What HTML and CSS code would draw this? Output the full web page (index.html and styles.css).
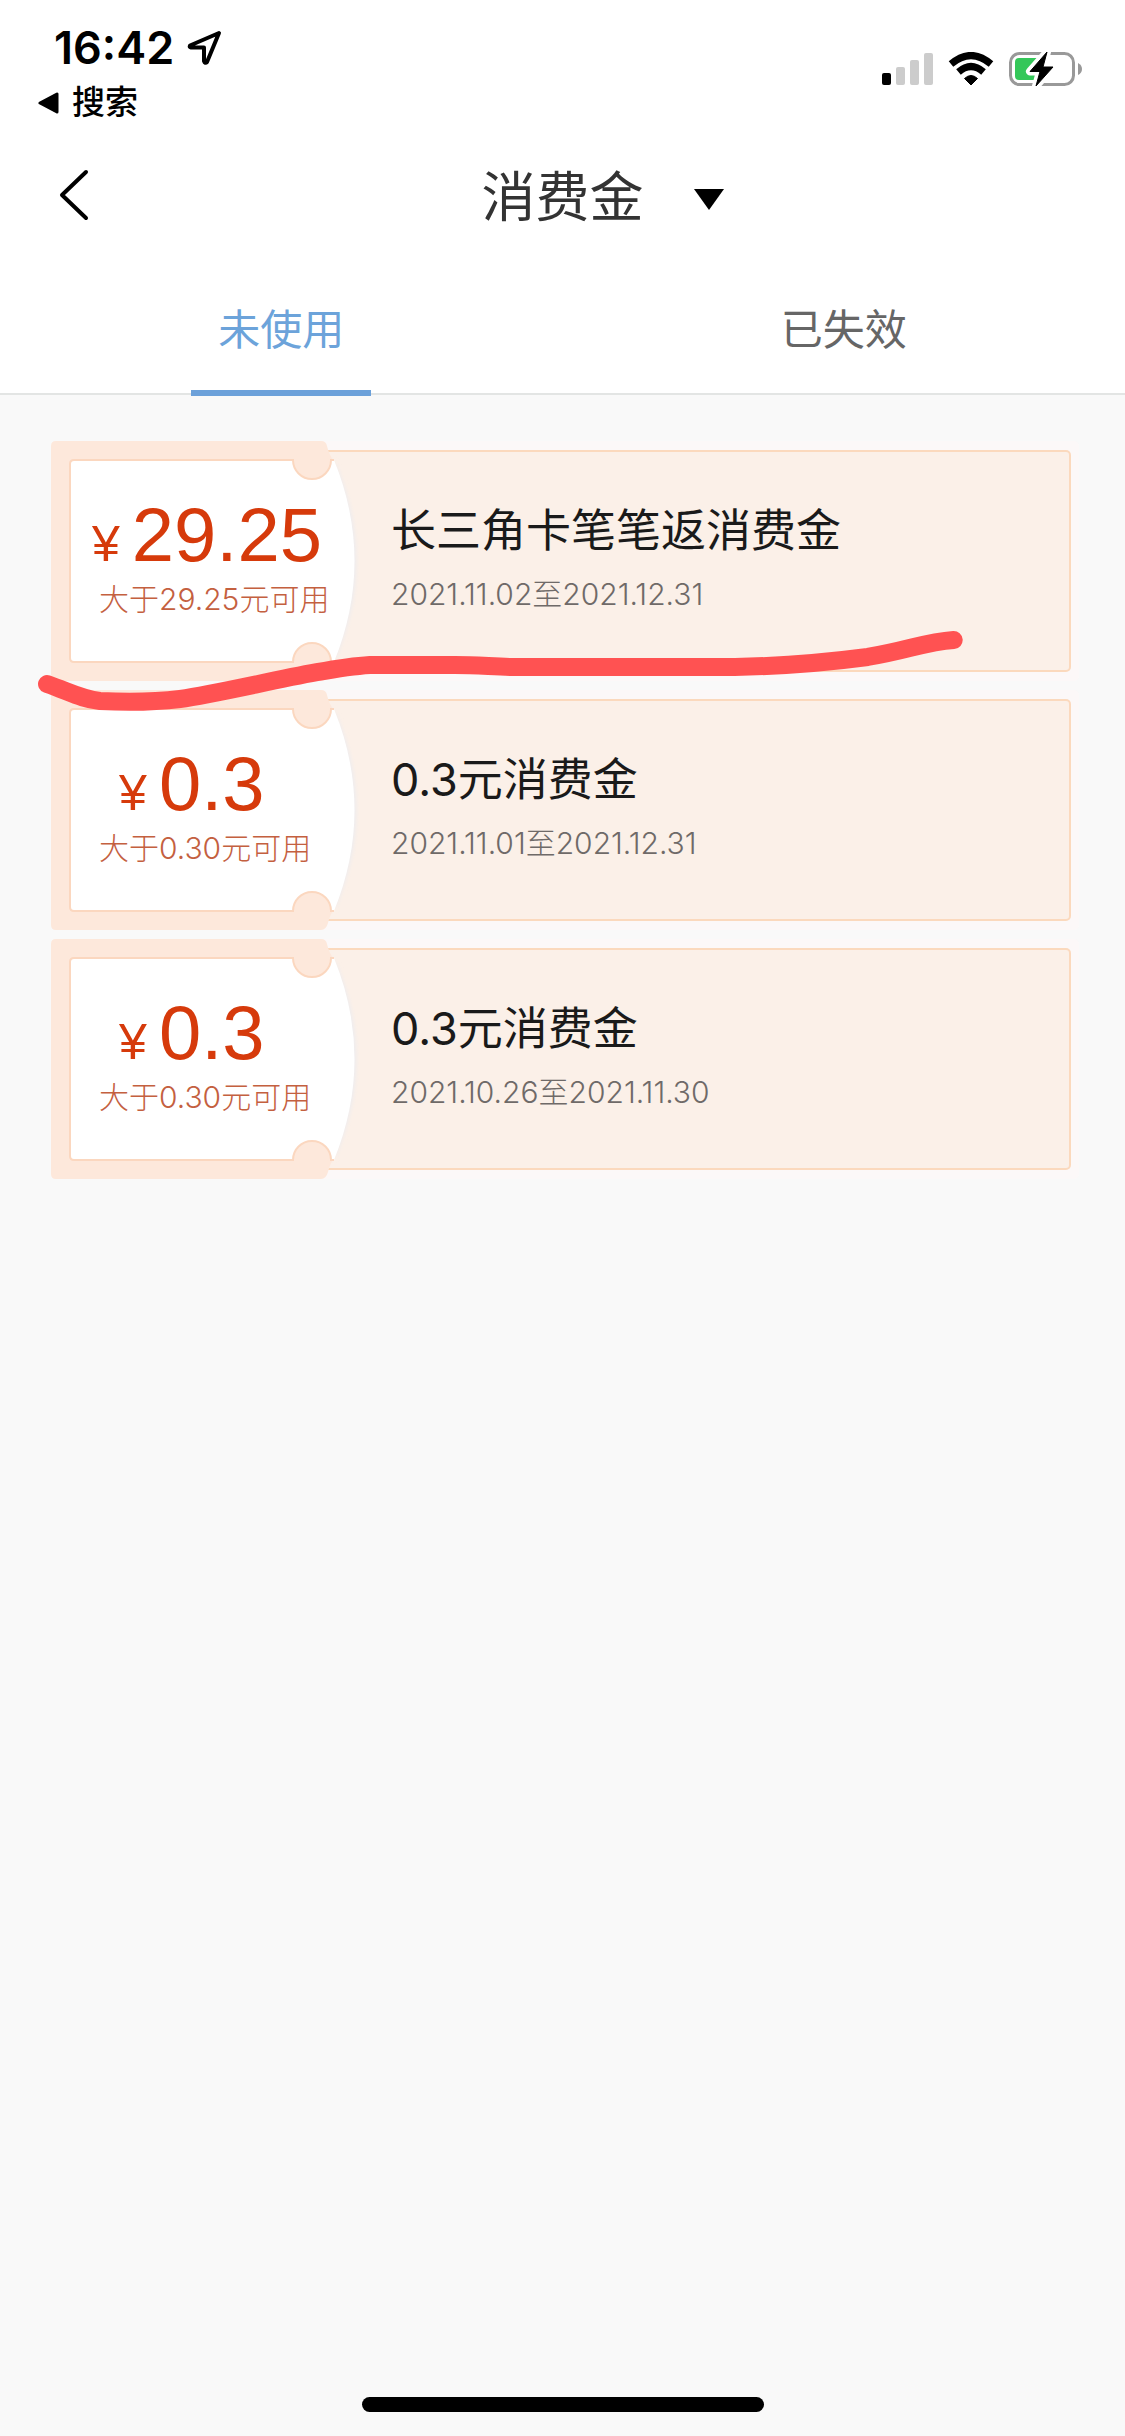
FILE: index.html
```html
<!DOCTYPE html>
<html lang="zh-CN">
<head>
  <meta charset="UTF-8">
  <meta name="viewport" content="width=device-width, initial-scale=1.0">
  <title>消费金</title>
  <link rel="stylesheet" href="styles.css">
</head>
<body>
  <!-- 票券左侧底图 -->
  <svg class="defs" width="0" height="0" aria-hidden="true">
    <defs>
      <filter id="blur"><feGaussianBlur stdDeviation="2"/></filter>
      <symbol id="ticket" viewBox="0 0 312 240">
        <path d="M283 20Q327 120 283 220Z" fill="#ececf0" filter="url(#blur)"/>
        <path d="M5 0H270Q275 0 276 5Q278 14 283 20V220Q279 224 277 233Q275 240 270 240H5Q0 240 0 235V5Q0 0 5 0Z" fill="#fde8db"/>
        <path d="M283 19Q324 120 283 221H23Q19 221 19 217V23Q19 19 23 19Z" fill="#fff"/>
        <path d="M283 19H23Q19 19 19 23V217Q19 221 23 221H283" fill="none" stroke="#fbd7bf" stroke-width="2"/>
        <path d="M242 19A19 19 0 0 0 280 19M242 221A19 19 0 0 1 280 221" fill="#fde8db" stroke="#fbd7bf" stroke-width="2"/>
        <path d="M243 16H279V20H243ZM243 220H279V224H243Z" fill="#fde8db"/>
      </symbol>
    </defs>
  </svg>

  <header class="top">
    <div class="status">
      <div class="status-left">
        <div class="clock">
          <span>16:42</span>
          <svg width="36" height="36" viewBox="0 0 36 36" aria-hidden="true">
            <path d="M32 3L3 15.500Q2 17 4 17.500H17V31Q18 34 20 32Z" fill="none" stroke="#000" stroke-width="4" stroke-linejoin="round"/>
          </svg>
        </div>
        <a class="return" href="#">
          <svg width="22" height="22" viewBox="0 0 22 22" aria-hidden="true">
            <path d="M2 11L19 2V20Z" stroke="#000" stroke-width="3" stroke-linejoin="round"/>
          </svg>
          搜索
        </a>
      </div>
      <div class="status-right">
        <svg width="51" height="34" viewBox="0 0 51 34" aria-hidden="true">
          <rect x="0" y="21" width="9" height="12" rx="2"/>
          <g fill="#ccc">
            <rect x="14" y="15" width="9" height="18" rx="2"/>
            <rect x="28" y="8" width="9" height="25" rx="2"/>
            <rect x="42" y="1" width="9" height="32" rx="2"/>
          </g>
        </svg>
        <svg width="46" height="34" viewBox="0 0 46 34" aria-hidden="true">
          <path d="M23 33L16.500 26.500Q23 20.500 29.500 26.500Z" stroke="#000" stroke-linejoin="round"/>
          <path d="M10.500 20Q23 9 35.500 20" fill="none" stroke="#000" stroke-width="7"/>
          <path d="M3 12Q23 -5 43 12" fill="none" stroke="#000" stroke-width="7"/>
        </svg>
        <svg width="74" height="38" viewBox="0 0 74 38" aria-hidden="true">
          <rect x="1.500" y="3.500" width="63" height="31" rx="9" fill="none" stroke="#999" stroke-width="3"/>
          <path d="M69 13Q73 15 73 19Q73 23 69 25Z" fill="#999"/>
          <rect x="6" y="8" width="30" height="22" rx="4" fill="#34c759"/>
          <path d="M38 2L21 21.500H31L27 36L44 17H34Z" fill="#fff" stroke="#fff" stroke-width="8" stroke-linejoin="round"/>
          <path d="M38 2L21 21.500H31L27 36L44 17H34Z" stroke="#000" stroke-linejoin="round"/>
        </svg>
      </div>
    </div>

    <div class="nav">
      <button class="back" type="button" aria-label="返回">
        <svg width="30" height="52" viewBox="0 0 30 52" aria-hidden="true">
          <path d="M27 3L3 26L27 49" fill="none" stroke="#000" stroke-width="4" stroke-linecap="round" stroke-linejoin="round"/>
        </svg>
      </button>
      <select class="type" aria-label="类型">
        <option>消费金</option>
      </select>
      <svg class="caret" width="30" height="21" viewBox="0 0 30 21" aria-hidden="true">
        <path d="M0 0H30L15 21Z"/>
      </svg>
    </div>

    <div class="tabs" role="tablist">
      <button class="tab active" type="button" role="tab" aria-selected="true">未使用</button>
      <button class="tab" type="button" role="tab" aria-selected="false">已失效</button>
    </div>
  </header>

  <main class="list">
    <article class="coupon">
      <svg class="ticket" aria-hidden="true"><use href="#ticket"/></svg>
      <div class="value">
        <p class="amount"><span class="yen">¥</span><span class="num">29.25</span></p>
        <p class="limit">大于29.25元可用</p>
      </div>
      <div class="info">
        <h2>长三角卡笔笔返消费金</h2>
        <p class="date">2021.11.02至2021.12.31</p>
      </div>
    </article>
    <article class="coupon">
      <svg class="ticket" aria-hidden="true"><use href="#ticket"/></svg>
      <div class="value">
        <p class="amount"><span class="yen">¥</span><span class="num">0.3</span></p>
        <p class="limit">大于0.30元可用</p>
      </div>
      <div class="info">
        <h2>0.3元消费金</h2>
        <p class="date">2021.11.01至2021.12.31</p>
      </div>
    </article>
    <article class="coupon">
      <svg class="ticket" aria-hidden="true"><use href="#ticket"/></svg>
      <div class="value">
        <p class="amount"><span class="yen">¥</span><span class="num">0.3</span></p>
        <p class="limit">大于0.30元可用</p>
      </div>
      <div class="info">
        <h2>0.3元消费金</h2>
        <p class="date">2021.10.26至2021.11.30</p>
      </div>
    </article>

    <!-- 红色手绘线 -->
    <svg class="mark" viewBox="0 0 934 90" aria-hidden="true">
      <path d="M17 59C40 67 51 74 70 76C90 77 125 77 150 74C200 67 290 43 340 40H425C450 40 465 42 485 42H705C760 41 800 37 838 32C880 25 895 17 924 15" fill="none" stroke="#ff5252" stroke-width="18" stroke-linecap="round"/>
    </svg>
  </main>

  <div class="home-bar"></div>
</body>
</html>
```
FILE: styles.css
```css
* {
  box-sizing: border-box;
}

body,
h2,
p {
  margin: 0;
  padding: 0;
}

body {
  display: flex;
  flex-direction: column;
  min-height: 100vh;
  background: #f9f9f9;
  color: #1a1a1a;
  font-family: "Liberation Sans", "Noto Sans CJK SC", sans-serif;
}

button,
select {
  padding: 0;
  border: 0;
  background: none;
  font-family: inherit;
}

svg {
  display: block;
}

.defs {
  position: absolute;
}

.top {
  background: #fff;
  border-bottom: 2px solid #e3e5e4;
}

/* 状态栏 */
.status {
  display: flex;
  justify-content: space-between;
  padding: 24px 42px 0 38px;
}

.clock {
  display: flex;
  align-items: center;
  gap: 13px;
  padding-left: 16px;
  color: #000;
  font: 600 45px/48px Inter, sans-serif;
}

.return {
  display: flex;
  align-items: center;
  gap: 12px;
  margin-top: 9px;
  color: #000;
  font-size: 33px;
  line-height: 44px;
  font-weight: 500;
  text-decoration: none;
}

.status-right {
  display: flex;
  align-items: center;
  align-self: flex-start;
  gap: 15px;
  padding-top: 26px;
}

/* 标题 */
.nav {
  display: grid;
  grid-template-columns: 1fr auto 1fr;
  align-items: center;
  padding: 22px 59px 23px;
}

.back {
  justify-self: start;
}

.type {
  padding-top: 6px;
  appearance: none;
  color: #333;
  font-size: 54px;
  line-height: 90px;
}

.caret {
  margin: 8px 0 0 50px;
}

.tabs {
  display: flex;
}

.tab {
  flex: 1;
  height: 127px;
  padding-bottom: 6px;
  color: #666;
  font-size: 42px;
}

.active {
  position: relative;
  color: #6ca3da;
}

.active::after {
  content: "";
  position: absolute;
  left: 50%;
  bottom: -3px;
  width: 180px;
  height: 6px;
  margin-left: -90px;
  background: #6ca1da;
}

/* 列表 */
.list {
  position: relative;
  display: flex;
  flex-direction: column;
  gap: 9px;
  padding: 46px 46px 0 51px;
}

.coupon {
  position: relative;
  display: flex;
  height: 240px;
  background: #fcf8f8;
  border-radius: 5px;
}

/* 右侧底框, 左边压在票券下面 */
.coupon::before {
  content: "";
  position: absolute;
  inset: 9px 8px 9px 276px;
  background: #fbf0e8;
  border: 2px solid #fbd9bd;
  border-left: 0;
  border-radius: 0 5px 5px 0;
}

.ticket {
  position: absolute;
  left: 0;
  top: 0;
  width: 312px;
  height: 240px;
}

.value {
  position: relative;
  width: 312px;
  padding-top: 62px;
}

.amount {
  display: flex;
  justify-content: center;
  align-items: baseline;
  gap: 12px;
  color: #d63a0b;
  line-height: 64px;
}

.yen {
  font-size: 50px;
}

.num {
  min-width: 136px;
  font-size: 76px;
}

.limit {
  margin-top: 3px;
  padding-left: 48px;
  color: #c4603f;
  font: 300 30px/40px Inter, "Noto Sans CJK SC", sans-serif;
}

.info {
  position: relative;
  flex: 1;
  padding: 60px 24px 0 28px;
}

.info h2 {
  font: 400 45px/60px Inter, "Noto Sans CJK SC", sans-serif;
}

.date {
  margin-top: 13px;
  color: #6f6a68;
  font: 300 30px/40px Inter, "Noto Sans CJK SC", sans-serif;
}

.mark {
  position: absolute;
  left: 30px;
  top: 230px;
  width: 83%;
}

.home-bar {
  width: 402px;
  height: 15px;
  margin: auto auto 24px;
  border-radius: 8px;
  background: #000;
}
```
